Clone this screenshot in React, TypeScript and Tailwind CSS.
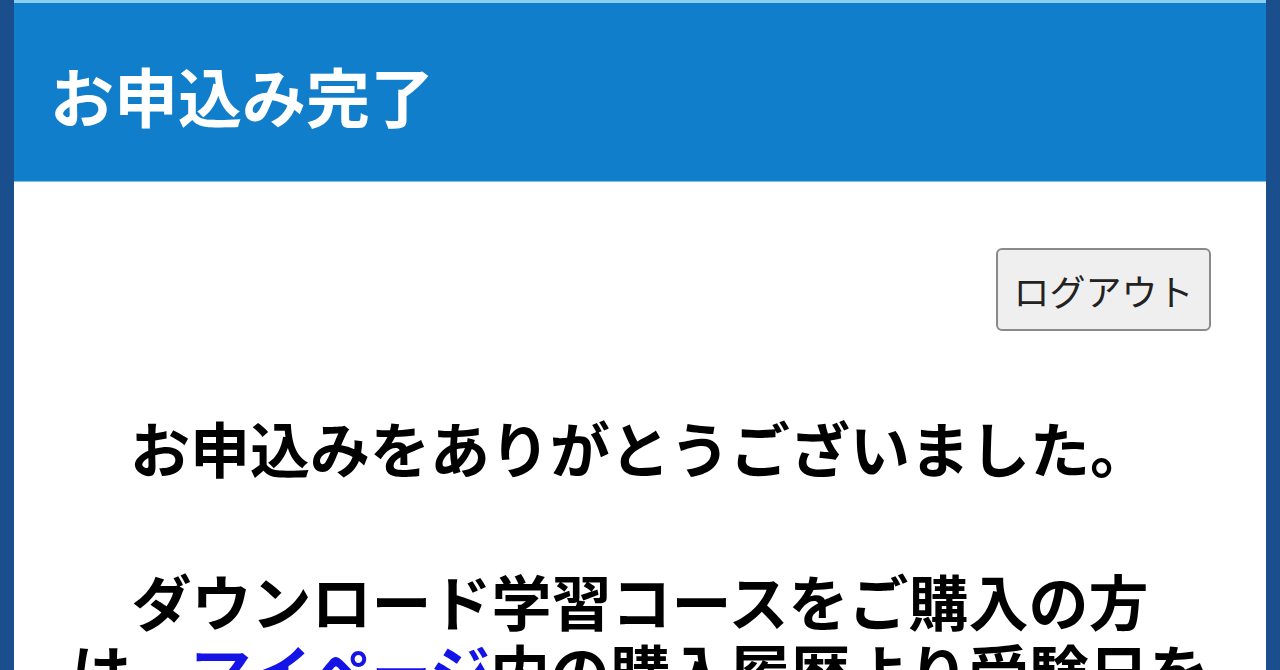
import React from "react";

export default function App() {
  const font = {
    fontFamily: '"Noto Sans CJK JP", "Noto Sans", sans-serif',
  };
  return (
    <div
      className="flex h-[670px] w-[1280px] overflow-hidden bg-white"
      style={font}
    >
      <div className="w-[14px] shrink-0 bg-[#1b4e8c]" />
      <div className="flex min-w-0 flex-1 flex-col">
        <header className="flex h-[182px] shrink-0 items-center border-t-[3px] border-b border-t-[#8fcdf0] border-b-[#7cc0ec] bg-[#117ecb] pl-[36px] pt-[4px]">
          <h1 className="text-[64px] font-bold leading-none text-white">
            お申込み完了
          </h1>
        </header>
        <main className="flex flex-col px-[40px] pt-[66px]">
          <div className="flex justify-end pr-[15px]">
            <button className="h-[83px] w-[215px] rounded-[6px] border-2 border-[#8a8a8a] bg-[#efefef] text-[36px] leading-none text-[#222]">
              ログアウト
            </button>
          </div>
          <p className="mt-[81px] text-center text-[60px] font-bold leading-[70px] text-black">
            お申込みをありがとうございました。
          </p>
          <p className="mt-[83px] text-center text-[60px] font-bold leading-[70px] text-black">
            ダウンロード学習コースをご購入の方
            <br />
            は、<a className="text-[#1414e6]">マイページ</a>内の購入履歴より受験日を
            <br />
            ご確認ください。
          </p>
        </main>
      </div>
      <div className="w-[14px] shrink-0 bg-[#1b4e8c]" />
    </div>
  );
}
